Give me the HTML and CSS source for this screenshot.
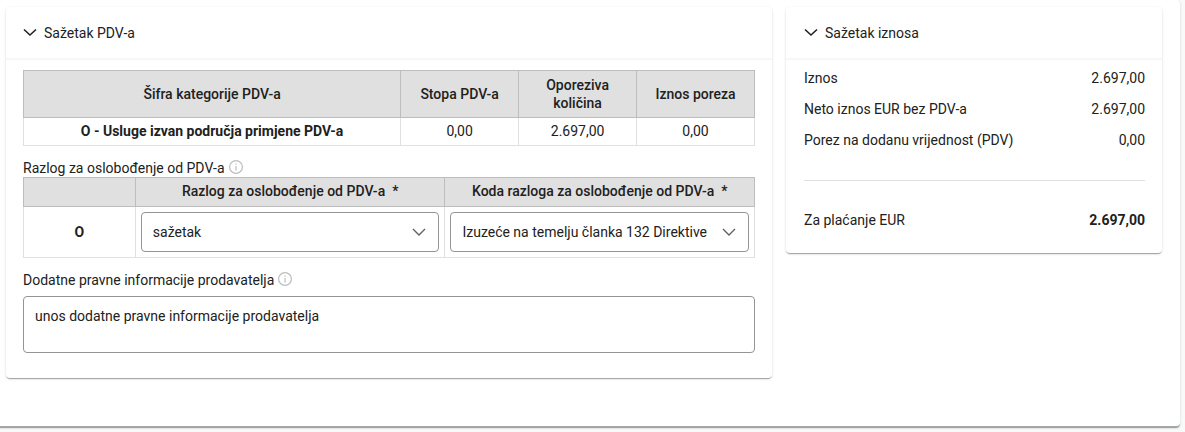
FILE: index.html
```html
<!DOCTYPE html>
<html lang="hr">
<head>
    <meta charset="UTF-8">
    <meta name="viewport" content="width=device-width, initial-scale=1.0">
    <title>Sažetak PDV-a</title>
    <link rel="stylesheet" href="styles.css">
</head>
<body>
    <main class="panel">
        <!-- Sažetak PDV-a -->
        <section class="card">
            <button type="button" class="card-header" aria-expanded="true">
                <svg class="chevron" viewBox="0 0 14 14" aria-hidden="true"><path d="M1 3.5l6 5.5 6-5.5"/></svg>
                <span>Sažetak PDV-a</span>
            </button>
            <div class="card-body">
                <table class="tablica tablica-pdv">
                    <thead>
                        <tr>
                            <th class="col-kategorija">Šifra kategorije PDV-a</th>
                            <th>Stopa PDV-a</th>
                            <th>Oporeziva količina</th>
                            <th>Iznos poreza</th>
                        </tr>
                    </thead>
                    <tbody>
                        <tr>
                            <td><b>O - Usluge izvan područja primjene PDV-a</b></td>
                            <td>0,00</td>
                            <td>2.697,00</td>
                            <td>0,00</td>
                        </tr>
                    </tbody>
                </table>

                <div class="naslov">
                    <span>Razlog za oslobođenje od PDV-a</span>
                    <svg class="info" viewBox="0 0 14 14" aria-hidden="true"><circle cx="7" cy="7" r="6.4"/><path d="M7 6v4.6M7 3.4v1.3"/></svg>
                </div>
                <table class="tablica tablica-razlog">
                    <thead>
                        <tr>
                            <th class="col-sifra"></th>
                            <th><label for="razlog">Razlog za oslobođenje od PDV-a&nbsp; *</label></th>
                            <th><label for="koda">Koda razloga za oslobođenje od PDV-a&nbsp; *</label></th>
                        </tr>
                    </thead>
                    <tbody>
                        <tr>
                            <td><b>O</b></td>
                            <td>
                                <div class="odabir">
                                    <select id="razlog">
                                        <option>sažetak</option>
                                    </select>
                                    <svg class="chevron" viewBox="0 0 14 14" aria-hidden="true"><path d="M1 4l6 6 6-6"/></svg>
                                </div>
                            </td>
                            <td>
                                <div class="odabir">
                                    <select id="koda">
                                        <option>Izuzeće na temelju članka 132 Direktive</option>
                                    </select>
                                    <svg class="chevron" viewBox="0 0 14 14" aria-hidden="true"><path d="M1 4l6 6 6-6"/></svg>
                                </div>
                            </td>
                        </tr>
                    </tbody>
                </table>

                <div class="naslov">
                    <label for="dodatne">Dodatne pravne informacije prodavatelja</label>
                    <svg class="info" viewBox="0 0 14 14" aria-hidden="true"><circle cx="7" cy="7" r="6.4"/><path d="M7 6v4.6M7 3.4v1.3"/></svg>
                </div>
                <textarea id="dodatne" class="napomena">unos dodatne pravne informacije prodavatelja</textarea>
            </div>
        </section>

        <!-- Sažetak iznosa -->
        <section class="card card-iznosi">
            <button type="button" class="card-header" aria-expanded="true">
                <svg class="chevron" viewBox="0 0 14 14" aria-hidden="true"><path d="M1 3.5l6 5.5 6-5.5"/></svg>
                <span>Sažetak iznosa</span>
            </button>
            <dl class="iznosi">
                <div class="redak">
                    <dt>Iznos</dt>
                    <dd>2.697,00</dd>
                </div>
                <div class="redak">
                    <dt>Neto iznos EUR bez PDV-a</dt>
                    <dd>2.697,00</dd>
                </div>
                <div class="redak">
                    <dt>Porez na dodanu vrijednost (PDV)</dt>
                    <dd>0,00</dd>
                </div>
                <div class="redak ukupno">
                    <dt>Za plaćanje EUR</dt>
                    <dd>2.697,00</dd>
                </div>
            </dl>
        </section>
    </main>
</body>
</html>
```
FILE: styles.css
```css
* {
    box-sizing: border-box;
}
body {
    margin: 0;
    background-color: #f8f9f9;
    color: #212121;
    font-family: Roboto, Arial, sans-serif;
    font-size: 14px;
    line-height: 18px;
}
.panel,
.card {
    background-color: #fff;
    border-radius: 4px;
    box-shadow: 0 2px 1px -1px rgba(0, 0, 0, 0.2), 0 1px 1px 0 rgba(0, 0, 0, 0.14), 0 1px 3px 0 rgba(0, 0, 0, 0.12);
}
.panel {
    display: grid;
    grid-template-columns: minmax(0, 1fr) 376px;
    align-items: start;
    gap: 14px;
    margin: 0 5px 5px -8px;
    padding: 7px 18px 48px 14px;
    border-bottom: 1px solid #a6a6a6;
}
/* Zaglavlje kartice */
.card-header {
    display: flex;
    align-items: center;
    gap: 7px;
    width: 100%;
    padding: 17px 17px 16px;
    border: none;
    border-bottom: 2px solid #f7f7f7;
    background: none;
    color: inherit;
    font: inherit;
    text-align: left;
    cursor: pointer;
}
.card-iznosi .card-header {
    padding-left: 18px;
}
.chevron {
    width: 14px;
    height: 14px;
    fill: none;
    stroke: #212121;
    stroke-width: 1.6;
}
.card-body {
    padding: 10px 17px 25px;
}
/* Tablice */
.tablica {
    width: 100%;
    border-collapse: collapse;
    table-layout: fixed;
    text-align: center;
}
.tablica th {
    padding: 5px;
    border: 1px solid #bdbdbd;
    background-color: #e0e0e0;
    font-weight: 500;
}
.tablica td {
    padding: 5px;
    border: 1px solid #e0e0e0;
}
.tablica-pdv th {
    padding: 5px 16px;
}
.tablica-pdv td {
    padding: 4px 5px 5px;
}
.tablica-pdv .col-kategorija {
    width: 51.6%;
}
.tablica-razlog .col-sifra {
    width: 15.3%;
}
.tablica-razlog th {
    padding: 4px 5px 6px;
}
.naslov {
    display: flex;
    align-items: center;
    gap: 4px;
    margin-top: 13px;
}
.info {
    width: 14px;
    height: 14px;
    margin-bottom: 2px;
    fill: none;
    stroke: #bdbdbd;
    stroke-width: 1.2;
}
/* Polja za unos */
.odabir {
    position: relative;
}
.odabir select {
    display: block;
    width: 100%;
    height: 40px;
    padding: 0 32px 0 11px;
    border: 1px solid #949494;
    border-radius: 4px;
    background-color: #fff;
    color: inherit;
    font: inherit;
    appearance: none;
}
.odabir .chevron {
    position: absolute;
    top: 13px;
    right: 13px;
    stroke: #616161;
    stroke-width: 1.4;
    pointer-events: none;
}
.napomena {
    display: block;
    width: 100%;
    height: 57px;
    margin-top: 7px;
    padding: 10px 11px;
    border: 1px solid #949494;
    border-radius: 4px;
    color: inherit;
    font: inherit;
    resize: none;
}
/* Iznosi */
.iznosi {
    display: flex;
    flex-direction: column;
    gap: 13px;
    margin: 0;
    padding: 9px 17px 24px 18px;
}
.redak {
    display: flex;
    justify-content: space-between;
}
.redak dd {
    margin: 0;
}
.ukupno {
    margin-top: 18px;
    padding-top: 30px;
    border-top: 1px solid #e0e0e0;
}
.ukupno dd {
    font-weight: 700;
}
```
